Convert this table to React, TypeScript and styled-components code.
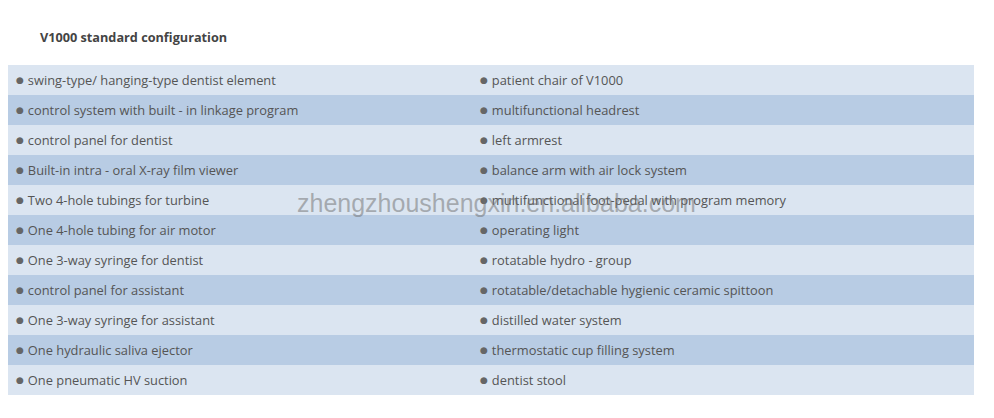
import React from 'react'
import styled, { createGlobalStyle } from 'styled-components'

const GlobalStyle = createGlobalStyle`
    html, body {
        margin: 0;
        padding: 0;
        background: #ffffff;
    }
    body {
        font-family: "Open Sans", "Liberation Sans", sans-serif;
        color: #555555;
    }
`

const rows: [string, string][] = [
    ['swing-type/ hanging-type dentist element', 'patient chair of V1000'],
    ['control system with built - in linkage program', 'multifunctional headrest'],
    ['control panel for dentist', 'left armrest'],
    ['Built-in intra - oral X-ray film viewer', 'balance arm with air lock system'],
    ['Two 4-hole tubings for turbine', 'multifunctional foot-pedal with program memory'],
    ['One 4-hole tubing for air motor', 'operating light'],
    ['One 3-way syringe for dentist', 'rotatable hydro - group'],
    ['control panel for assistant', 'rotatable/detachable hygienic ceramic spittoon'],
    ['One 3-way syringe for assistant', 'distilled water system'],
    ['One hydraulic saliva ejector', 'thermostatic cup filling system'],
    ['One pneumatic HV suction', 'dentist stool'],
]

const App = () => {
    return (
        <Page>
            <GlobalStyle />
            <Title>V1000 standard configuration</Title>
            <Table>
                {rows.map(([left, right], i) => (
                    <Row key={i} dark={i % 2 === 1}>
                        <Cell>
                            <Dot>●</Dot>
                            {left}
                        </Cell>
                        <Cell>
                            <Dot>●</Dot>
                            {right}
                        </Cell>
                    </Row>
                ))}
                <Watermark>zhengzhoushengxin.en.alibaba.com</Watermark>
            </Table>
        </Page>
    )
}

const Page = styled.div`
    width: 994px;
    height: 418px;
    padding: 28px 20px 0 8px;
    box-sizing: border-box;
`

const Title = styled.div`
    padding-left: 32px;
    height: 37px;
    font-size: 12.7px;
    font-weight: 700;
    color: #444444;
    line-height: 18px;
`

const Table = styled.div`
    position: relative;
    width: 966px;
`

const Row = styled.div<{ dark: boolean }>`
    display: grid;
    grid-template-columns: 464px 1fr;
    height: 30px;
    align-items: center;
    background: ${(p) => (p.dark ? '#b8cce4' : '#dbe5f1')};
`

const Cell = styled.div`
    display: flex;
    align-items: center;
    padding-left: 8px;
    font-size: 12.85px;
    color: #555555;
    white-space: nowrap;
`

const Dot = styled.span`
    font-family: "DejaVu Sans", sans-serif;
    font-size: 9px;
    line-height: 1;
    color: #666666;
    margin-right: 4px;
    margin-top: 1px;
`

const Watermark = styled.div`
    position: absolute;
    left: 289px;
    top: 124px;
    font-family: "Liberation Sans", Arial, sans-serif;
    font-size: 25px;
    color: rgba(110, 110, 110, 0.5);
    pointer-events: none;
`

export default App
